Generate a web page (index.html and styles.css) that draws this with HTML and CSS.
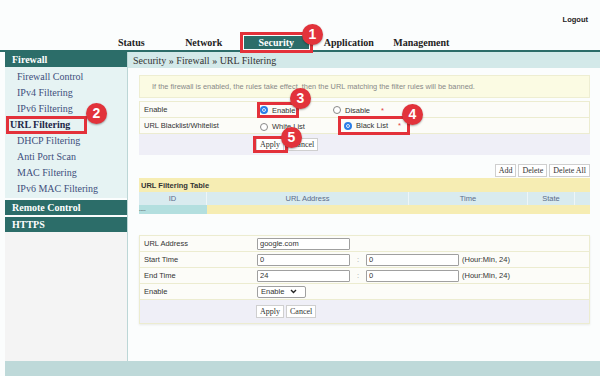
FILE: index.html
```html
<!DOCTYPE html>
<html>
<head>
  <meta charset="UTF-8">
  <link rel="stylesheet" href="styles.css">
</head>
<body>
  <div class="top">
    <span class="logout">Logout</span>
  </div>

  <div class="nav">
    <span class="nav-item">Status</span>
    <span class="nav-item">Network</span>
    <span class="nav-item"><span class="nav-tab mark">Security<span class="badge b1">1</span></span></span>
    <span class="nav-item">Application</span>
    <span class="nav-item">Management</span>
  </div>

  <div class="main">
    <div class="side">
      <div class="side-head">Firewall</div>
      <div class="side-list">
        <div class="side-item">Firewall Control</div>
        <div class="side-item">IPv4 Filtering</div>
        <div class="side-item">IPv6 Filtering</div>
        <div class="side-item current"><span class="cur-mark mark">URL Filtering<span class="badge b2">2</span></span></div>
        <div class="side-item">DHCP Filtering</div>
        <div class="side-item">Anti Port Scan</div>
        <div class="side-item">MAC Filtering</div>
        <div class="side-item">IPv6 MAC Filtering</div>
      </div>
      <div class="side-head">Remote Control</div>
      <div class="side-head">HTTPS</div>
    </div>

    <div class="content">
      <div class="crumb">Security &raquo; Firewall &raquo; URL Filtering</div>
      <div class="panel">
        <div class="info">If the firewall is enabled, the rules take effect, then the URL matching the filter rules will be banned.</div>

        <div class="box">
          <div class="row">
            <span class="lbl">Enable</span>
            <span class="opt"><span class="en-mark mark"><span class="radio on"></span>Enable<span class="badge b3">3</span></span></span>
            <span class="opt opt2"><span class="radio"></span>Disable<span class="star">*</span></span>
          </div>
          <div class="row">
            <span class="lbl">URL Blacklist/Whitelist</span>
            <span class="opt"><span class="wl"><span class="radio"></span>White List</span></span>
            <span class="opt"><span class="bl-mark mark"><span class="radio on"></span>Black List<span class="star star2">*</span><span class="badge b4">4</span></span></span>
          </div>
          <div class="btn-row">
            <span class="ap-mark mark"><button class="btn">Apply</button><span class="badge b5">5</span></span><button class="btn">Cancel</button>
          </div>
        </div>

        <div class="tools">
          <button class="btn">Add</button>
          <button class="btn">Delete</button>
          <button class="btn">Delete All</button>
        </div>

        <table class="list">
          <tr><td class="list-title" colspan="5">URL Filtering Table</td></tr>
          <tr class="list-head">
            <td class="c-id">ID</td>
            <td class="c-url">URL Address</td>
            <td class="c-time">Time</td>
            <td class="c-state">State</td>
            <td></td>
          </tr>
          <tr class="list-row">
            <td class="c-empty">----</td>
            <td></td><td></td><td></td><td></td>
          </tr>
        </table>

        <div class="form">
          <div class="frow">
            <span class="lbl">URL Address</span>
            <input class="field" value="google.com">
          </div>
          <div class="frow">
            <span class="lbl">Start Time</span>
            <input class="field" value="0"><span class="colon">:</span><input class="field" value="0"><span class="hint">(Hour:Min, 24)</span>
          </div>
          <div class="frow">
            <span class="lbl">End Time</span>
            <input class="field" value="24"><span class="colon">:</span><input class="field" value="0"><span class="hint">(Hour:Min, 24)</span>
          </div>
          <div class="frow">
            <span class="lbl">Enable</span>
            <span class="sel">Enable <svg width="7" height="5" viewBox="0 0 7 5"><path d="M1 1l2.5 2.5L6 1" fill="none" stroke="#222" stroke-width="1.4"/></svg></span>
          </div>
          <div class="fbtns">
            <button class="btn">Apply</button><button class="btn">Cancel</button>
          </div>
        </div>
      </div>
    </div>
  </div>

  <div class="foot"></div>
</body>
</html>
```

FILE: styles.css
```css
body{
  margin: 0;
  background-color: #fbfdfd;
  font-family: "Liberation Serif", serif;
  color: #222;
}
.top{
  height: 23px;
  padding-top: 10px;
  text-align: right;
  padding-right: 12px;
  font-size: 7.5px;
  line-height: 20px;
}
.logout{
  font-family: "Liberation Sans", Arial, sans-serif;
  font-weight: bold;
  font-size: 7.5px;
  color: #222;
}
.nav{
  height: 17px;
  border-bottom: 2px solid #2c6d69;
  padding-left: 95px;
  display: flex;
  align-items: flex-end;
}
.nav-item{
  width: 72.5px;
  text-align: center;
  font-size: 10px;
  font-weight: bold;
  line-height: 13px;
  margin-bottom: 1px;
  color: #222;
}
.nav-tab{
  display: block;
  margin: 0 4px;
  background-color: #2c6d69;
  color: white;
}

/* annotations */
.mark{
  position: relative;
  outline: 3px solid #e3313a;
}
.nav-tab.mark{
  outline-offset: 1px;
}
.badge{
  position: absolute;
  width: 21px;
  height: 21px;
  border-radius: 50%;
  background-color: #e2333b;
  color: white;
  font-family: "Liberation Sans", Arial, sans-serif;
  font-size: 14px;
  font-weight: bold;
  line-height: 21px;
  text-align: center;
  box-shadow: 0 1px 2px rgba(0,0,0,0.35);
  z-index: 2;
}
.b1{ left: 58px; top: -12px; }
.b2{ left: 80px; top: -13px; }
.b3{ left: 33px; top: -14px; }
.b4{ left: 64px; top: -12px; }
.b5{ left: 28px; top: -9px; }

.main{
  display: flex;
  margin-left: 5px;
  height: 309px;
}
.side{
  width: 122px;
  background-color: #f4f4f4;
}
.side-head{
  height: 15px;
  line-height: 15px;
  background-color: #2c6d69;
  color: white;
  font-weight: bold;
  font-size: 10px;
  padding-left: 7px;
  border-top: 2px solid #fbfdfd;
}
.side-head:first-child{
  border-top: none;
}
.side-list{
  background-color: #e6f3f3;
  padding: 2px 0 1px;
}
.side-item{
  height: 16px;
  line-height: 16px;
  font-size: 10px;
  padding-left: 12px;
  color: #3e4f7c;
}
.side-item.current{
  padding-left: 1px;
  font-weight: bold;
  color: #1d2748;
}
.cur-mark{
  display: inline-block;
  height: 18px;
  line-height: 18px;
  margin-top: -2px;
  padding: 0 17px 0 4px;
  outline-offset: -3px;
}

.content{
  flex: 1;
  border-left: 1px solid #bcd6d6;
}
.crumb{
  height: 16px;
  line-height: 17px;
  background-color: #d3e9e9;
  font-size: 10px;
  padding-left: 5px;
  color: #333;
}
.panel{
  padding: 7px 10px 0 11px;
}
.info{
  height: 21px;
  line-height: 21px;
  background-color: #fbfbe3;
  border: 1px solid #eeeed2;
  font-family: "Liberation Sans", Arial, sans-serif;
  font-size: 7.4px;
  color: #888;
  padding-left: 12px;
}
.box{
  margin-top: 3px;
  background-color: #efeff7;
  font-family: "Liberation Sans", Arial, sans-serif;
  font-size: 7.5px;
  color: #333;
}
.row{
  display: grid;
  grid-template-columns: 114px 77px 1fr;
  height: 15px;
  line-height: 15px;
  background-color: #fcfcf8;
  border: 1px solid #ececd0;
  border-bottom: none;
}
.row:nth-child(2){
  border-bottom: 1px solid #ececd0;
}
.lbl{
  padding-left: 4px;
}
.opt{
  display: flex;
  align-items: center;
}
.opt2{
  padding-left: 2px;
}
.radio{
  display: inline-block;
  width: 8px;
  height: 8px;
  border: 1px solid #888;
  border-radius: 50%;
  background-color: white;
  margin-right: 4px;
  box-sizing: border-box;
}
.radio.on{
  border: 2px solid #2a7ee8;
  background-color: #2a7ee8;
  box-shadow: inset 0 0 0 1px white;
}
.star{
  color: #e04040;
  margin-left: 11px;
}
.star2{
  margin-left: 10px;
}
.en-mark{
  display: inline-flex;
  align-items: center;
  height: 16px;
  margin-left: 3px;
  padding: 0 4px 0 3px;
  outline-offset: -3px;
}
.wl{
  display: inline-flex;
  align-items: center;
  padding-left: 6px;
}
.bl-mark{
  display: inline-flex;
  align-items: center;
  height: 19px;
  margin-left: 7px;
  margin-top: -2px;
  padding: 0 9px 0 6px;
  outline-offset: -3px;
}
.btn-row{
  height: 21px;
  display: flex;
  align-items: center;
  padding-left: 114px;
}
.ap-mark{
  display: inline-flex;
  align-items: center;
  height: 17px;
  padding: 0 3px;
  outline-offset: -3px;
}
.btn{
  font-family: "Liberation Serif", serif;
  font-size: 8px;
  color: #333;
  background-color: white;
  border: 1px solid #cfcfcf;
  padding: 0 3px;
  height: 13px;
  line-height: 11px;
  margin: 0 1px 0 0;
}
.tools{
  margin-top: 9px;
  height: 14px;
  display: flex;
  justify-content: flex-end;
  align-items: flex-start;
  gap: 2px;
}
.tools .btn{
  margin: 0;
}
.list{
  width: 100%;
  border-collapse: collapse;
  font-family: "Liberation Sans", Arial, sans-serif;
  font-size: 7.5px;
}
.list td{
  padding: 0;
}
.list-title{
  height: 14px;
  background-color: #f6edb3;
  font-weight: bold;
  color: #333;
  padding-left: 2px !important;
}
.list-head td{
  height: 13px;
  background-color: #d9ebef;
  color: #5a6c8c;
  text-align: center;
  border-left: 1px solid #eef6f8;
}
.list-head td:first-child{
  border-left: none;
}
.c-id{ width: 67px; }
.c-url{ width: 201px; }
.c-time{ width: 118px; }
.c-state{ width: 46px; }
.list-row td{
  height: 9px;
  background-color: #f6edb3;
}
.list-row .c-empty{
  background-color: #b3dfdf;
  font-size: 5px;
  line-height: 6px;
  color: #333;
}
.form{
  margin-top: 21px;
  background-color: #efeff7;
  border: 1px solid #ececd0;
  font-family: "Liberation Sans", Arial, sans-serif;
  font-size: 7.5px;
  color: #333;
  box-shadow: 0 1px 2px rgba(0,0,0,0.08);
}
.frow{
  display: flex;
  align-items: center;
  height: 15px;
  background-color: #fcfcf8;
  border-bottom: 1px solid #ececd0;
}
.frow .lbl{
  width: 113px;
}
.field{
  width: 93px;
  height: 12px;
  box-sizing: border-box;
  border: 1px solid #a0a0a0;
  border-radius: 1px;
  padding: 0 2px;
  font-family: "Liberation Sans", Arial, sans-serif;
  font-size: 7.5px;
  color: #333;
  margin: 0;
}
.colon{
  width: 16px;
  text-align: center;
  color: #999;
}
.hint{
  margin-left: 3px;
}
.sel{
  display: inline-flex;
  align-items: center;
  gap: 6px;
  width: 49px;
  height: 12px;
  box-sizing: border-box;
  border: 1px solid #a0a0a0;
  border-radius: 2px;
  padding-left: 3px;
  background-color: white;
}
.fbtns{
  height: 23px;
  display: flex;
  align-items: center;
  padding-left: 116px;
}
.fbtns .btn{
  margin-right: 2px;
}
.foot{
  margin-left: 5px;
  height: 15px;
  background-color: #bed9d9;
}
```
